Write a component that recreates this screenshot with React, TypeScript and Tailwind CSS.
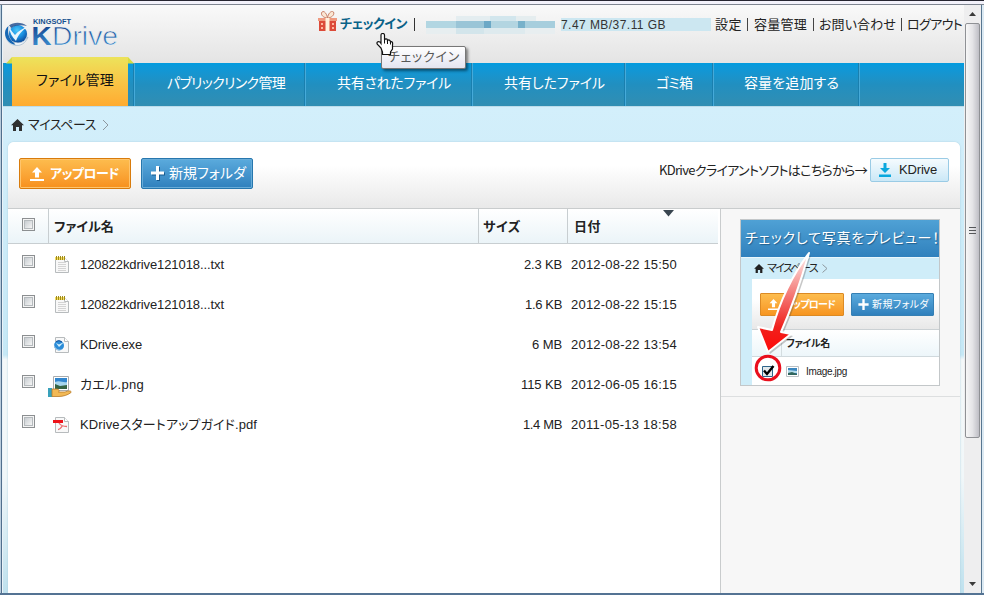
import { useLayoutEffect, useRef, useState } from "react";
import clsx from "clsx";

type LabelProps = { children: string; w: number; className?: string };

/* Single-line label whose tracking is adjusted so that it spans `w` pixels. */
function Label({ children, w, className }: LabelProps) {
  const ref = useRef<HTMLSpanElement>(null);
  const [spacing, setSpacing] = useState(0);
  useLayoutEffect(() => {
    const el = ref.current;
    if (!el) return;
    el.style.letterSpacing = "0px";
    const natural = el.getBoundingClientRect().width;
    const next = (w - natural) / children.length;
    el.style.letterSpacing = `${next}px`;
    setSpacing(next);
  }, [children, w]);
  return (
    <span className={clsx("inline-block shrink-0 whitespace-nowrap", className)} style={{ width: w }}>
      <span ref={ref} className="[font-feature-settings:'palt']" style={{ letterSpacing: spacing }}>
        {children}
      </span>
    </span>
  );
}

function Logo() {
  return (
    <svg width="120" height="40" viewBox="0 0 120 40" className="block">
      <defs>
        <radialGradient id="orb" cx="0.45" cy="0.3" r="0.75">
          <stop offset="0" stopColor="#49c8fa" />
          <stop offset="0.5" stopColor="#1a8fe0" />
          <stop offset="1" stopColor="#0a3c8c" />
        </radialGradient>
        <linearGradient id="word" x1="0" y1="0" x2="0" y2="1">
          <stop offset="0.1" stopColor="#123f8c" />
          <stop offset="0.9" stopColor="#3e93d3" />
        </linearGradient>
      </defs>
      <ellipse cx="11.500" cy="18.500" rx="11" ry="10.500" fill="#c9d8e4" />
      <circle cx="13" cy="17" r="9" fill="url(#orb)" />
      <path d="M3.500 9C1.500 17 5 25 13 28C6 28.500 0 23 0 16C0 13 1.500 10.500 3.500 9Z" fill="#1667b4" />
      <path d="M4 10C4.500 15 7 20 11 24C13 18 17 13 23 10C18 11 13 14 10 18C8 16 6 13 4 10Z" fill="#e9f6fc" />
      <path d="M9 25C14 27 20 25 23 20C21 26 15 29.500 10 28Z" fill="#f3f7fa" stroke="#8aa5bd" strokeWidth=".5" />
      <path d="M4 8.500C9 4.500 17 5 22 9C16 7.500 9 8.500 6.500 11Z" fill="#0e3e85" opacity=".75" />
      <text x="28" y="6.500" fontFamily="Liberation Sans" fontWeight="700" fontSize="6.500" fill="#14508f" textLength="38" lengthAdjust="spacingAndGlyphs">KINGSOFT</text>
      <text x="26.500" y="28" fontFamily="Liberation Sans" fontWeight="700" fontSize="26" fill="url(#word)" textLength="20" lengthAdjust="spacingAndGlyphs">K</text>
      <text x="47" y="28" fontFamily="Liberation Sans" fontSize="26" fill="url(#word)" stroke="#eff0f1" strokeWidth=".7" textLength="66" lengthAdjust="spacingAndGlyphs">Drive</text>
    </svg>
  );
}

function Gift() {
  return (
    <svg width="20" height="22" viewBox="0 0 20 22">
      <path d="M9.500 8C6 8 2 5 4 2C6 0 9 4 9.500 8C10 4 13 0 15.500 2C17 5 13 8 9.500 8Z" fill="#fae7d4" stroke="#c9826a" />
      <path d="M1 8H18V21H1Z" fill="#dc4a39" />
      <path d="M0 8H19V11H0Z" fill="#ef9a80" />
      <path d="M7.500 8H11.500V21H7.500Z" fill="#fff0dd" />
      <path d="M3 13h2v2H3zM14 13h2v2h-2zM3 17h2v2H3zM14 17h2v2h-2z" fill="#ffb59d" />
    </svg>
  );
}

function Home() {
  return (
    <svg width="13" height="12" viewBox="0 0 13 12">
      <path d="M6.500 0L13 6.200H11V12H8V8H5V12H2V6.200H0Z" fill="#303030" />
    </svg>
  );
}

function Chevron() {
  return (
    <svg width="7" height="12" viewBox="0 0 7 12">
      <path d="M1 1L6 6L1 11" fill="none" stroke="#8e989e" />
    </svg>
  );
}

function UploadIcon() {
  return (
    <svg width="14" height="14" viewBox="0 0 14 14" fill="#fff">
      <path d="M7 0L12 5.500H9V10.500H5V5.500H2ZM0 12H14V14H0Z" />
    </svg>
  );
}

function DownloadIcon() {
  return (
    <svg width="12" height="14" viewBox="0 0 12 14" fill="#0ba8de">
      <path d="M4.500 0H7.500V5H11L6 10L1 5H4.500ZM0 11.500H12V14H0Z" />
    </svg>
  );
}

function PlusIcon() {
  return (
    <svg width="14" height="15" viewBox="0 0 14 15">
      <path d="M6 1H9V6.500H14V9.500H9V15H6V9.500H1V6.500H6Z" fill="#175b90" />
      <path d="M5 0H8V5.500H13V8.500H8V14H5V8.500H0V5.500H5Z" fill="#fff" />
    </svg>
  );
}

type Kind = "txt" | "exe" | "png" | "pdf";

function FileIcon({ kind }: { kind: Kind }) {
  if (kind === "png") {
    return (
      <svg width="24" height="22" viewBox="0 0 24 22">
        <path d="M5.500 1.500H20.500V15.500H5.500Z" fill="#fff" stroke="#a9acae" />
        <path d="M7 3H19V14H7Z" fill="#3186ce" />
        <path d="M7 7C12 5 15 8 19 7V11H7Z" fill="#a6d6ee" />
        <path d="M7 9L12 11L19 10V14H7Z" fill="#356444" />
        <path d="M0 13H4V22H0Z" fill="#38a1bb" />
        <path d="M4 14H9C11 14 12 16.500 10.500 17H17C20 15.500 24 15.500 23 17.500C20 20 15 21.500 11 21.500H4Z" fill="#f2b955" stroke="#b87a27" strokeWidth=".8" />
      </svg>
    );
  }
  return (
    <svg width="24" height="22" viewBox="0 0 24 22">
      <path d="M7.500 2.500H16.500L20.500 6.500V17.500H7.500Z" fill="#f8f8f8" stroke="#b7bbbd" />
      <path d="M16.500 2.500V6.500H20.500" fill="#fff" stroke="#b7bbbd" />
      {kind === "txt" && (
        <>
          <path d="M7 2H17V5H7Z" fill="#f5df60" />
          <path d="M8.500 1V5M10.500 1V5M12.500 1V5M14.500 1V5M16.500 1V5" stroke="#a08a1c" />
          <path d="M10 7.500H18M10 9.500H18M10 11.500H18M10 13.500H18M10 15.500H18" stroke="#d4d4d4" />
        </>
      )}
      {kind === "exe" && (
        <>
          <circle cx="11" cy="10.500" r="5" fill="#2b8cd8" />
          <path d="M6 8C6 13 10 16 15 14C11 17 5 15 6 8Z" fill="#b6cfe2" />
          <path d="M8 8L11 12L16 7L11 9.500Z" fill="#d5f0fc" />
          <path d="M8 6.500Q11 4.500 14 7" stroke="#144f98" fill="none" />
        </>
      )}
      {kind === "pdf" && (
        <>
          <path d="M5 5H15V8H5Z" fill="#ed1118" />
          <path d="M11 8C13 11 16 11.500 19 11.500M14.500 10.500C13 13 12 14.500 10 14.500" fill="none" stroke="#ea6b6d" strokeWidth="1.300" />
        </>
      )}
    </svg>
  );
}

function Checkbox() {
  return (
    <span className="block size-[13px] border border-[#8c8f91] bg-[#f4f4f4] p-px">
      <span className="block size-full border border-[#b5babd] bg-linear-to-br from-[#c8cdd1] to-[#f5f5f5]" />
    </span>
  );
}

const tabs = [
  { label: "パブリックリンク管理", w: 118, box: "w-[171px] pl-[32px]" },
  { label: "共有されたファイル", w: 114, box: "w-[167px] pl-[31px]" },
  { label: "共有したファイル", w: 101, box: "w-[153px] pl-[31px]" },
  { label: "ゴミ箱", w: 36, box: "w-[88px] pl-[30px]" },
  { label: "容量を追加する", w: 95, box: "w-[146px] pl-[30px]" },
];

const files: { kind: Kind; name: string; nameW: number; size: string; sizeW: number; date: string }[] = [
  { kind: "txt", name: "120822kdrive121018...txt", nameW: 144, size: "2.3 KB", sizeW: 38, date: "2012-08-22 15:50" },
  { kind: "txt", name: "120822kdrive121018...txt", nameW: 144, size: "1.6 KB", sizeW: 37, date: "2012-08-22 15:15" },
  { kind: "exe", name: "KDrive.exe", nameW: 62, size: "6 MB", sizeW: 30, date: "2012-08-22 13:54" },
  { kind: "png", name: "カエル.png", nameW: 64, size: "115 KB", sizeW: 41, date: "2012-06-05 16:15" },
  { kind: "pdf", name: "KDriveスタートアップガイド.pdf", nameW: 177, size: "1.4 MB", sizeW: 39, date: "2011-05-13 18:58" },
];

function Header() {
  return (
    <header className="flex h-[58px] bg-linear-to-b from-[#f9f9f9] to-[#e4e4e4] text-[13px] leading-[18px] text-[#222]">
      <div className="w-[315px] shrink-0 pt-[12px] pl-[2px]">
        <Logo />
      </div>
      <div className="mt-[5px] flex h-[22px] items-center">
        <Gift />
        <Label w={67} className="mt-[6px] ml-[2px] font-bold text-[#096288]">チェックイン</Label>
        <span className="mt-[7px] ml-[7px] h-[13px] w-px bg-[#333]" />
        <div className="mt-[9px] ml-[11px] flex h-[19px] w-[129px] flex-col">
          <div className="flex h-[5px] pl-[30px]">
            <i className="w-[34px] bg-[#e4edf0]" /><i className="w-[26px] bg-[#d2e6ed]" /><i className="w-[20px] bg-[#e5edef]" />
          </div>
          <div className="flex h-[7px]">
            <i className="w-[30px] bg-[#b2d6e2]" /><i className="w-[28px] bg-[#9ac5d7]" /><i className="w-[7px] bg-[#6ca8c6]" />
            <i className="w-[27px] bg-[#b3d5e1]" /><i className="w-[7px] bg-[#78b1ca]" /><i className="w-[30px] bg-[#a7cedd]" />
          </div>
          <div className="flex h-[6px]">
            <i className="w-[30px] bg-[#e7eef0]" /><i className="w-[28px] bg-[#d3e5eb]" /><i className="w-[41px] bg-[#deeaee]" /><i className="w-[30px] bg-[#e8eef0]" />
          </div>
        </div>
        <div className="mt-[7px] ml-[6px] flex h-[13px] w-[150px] items-center bg-[#cce7f1] text-[12px] text-[#333]">
          <Label w={105}>7.47 MB/37.11 GB</Label>
        </div>
        <Label w={27} className="mt-[7px] ml-[4px]">設定</Label>
        <span className="mt-[7px] ml-[5px] h-[13px] w-px bg-[#444]" />
        <Label w={53} className="mt-[7px] ml-[6px]">容量管理</Label>
        <span className="mt-[7px] ml-[6px] h-[13px] w-px bg-[#444]" />
        <Label w={77} className="mt-[7px] ml-[5px]">お問い合わせ</Label>
        <span className="mt-[7px] ml-[5px] h-[13px] w-px bg-[#444]" />
        <Label w={55} className="mt-[7px] ml-[5px]">ログアウト</Label>
      </div>
    </header>
  );
}

function Nav() {
  return (
    <nav className="relative flex h-[43px] bg-linear-to-b from-[#029bdf] via-[#218fc0] to-[#318eb2] text-[14px] leading-[41px] text-white">
      <div className="w-[131px] shrink-0 border-l border-[#2d8eb5]" />
      <svg className="absolute -top-[6px] left-[3px]" width="128" height="7">
        <path d="M0 6.500L6 0H122L128 6.500Z" fill="#d6dc42" />
      </svg>
      <div className="absolute -top-[6px] left-[9px] h-[49px] w-[116px] bg-linear-to-b from-[#ece35b] via-[#f8c546] to-[#ffab30] pl-[24px] leading-[47px] text-[#111]">
        <Label w={78}>ファイル管理</Label>
      </div>
      {tabs.map((t) => (
        <div key={t.label} className={clsx("shrink-0 border-l border-[#46aad9] shadow-[-1px_0_0_#1a7fae]", t.box)}>
          <Label w={t.w}>{t.label}</Label>
        </div>
      ))}
      <div className="flex-1 border-l border-[#46aad9] shadow-[-1px_0_0_#1a7fae]" />
    </nav>
  );
}

function Toolbar() {
  return (
    <div className="flex h-[67px] items-start rounded-t-[6px] border-b border-[#c9cccd] bg-linear-to-b from-white from-35% to-[#e9e9e9] pt-[16px] pl-[11px] text-[13px]">
      <button className="flex h-[31px] w-[112px] items-center rounded-[2px] border border-[#d87b0c] bg-linear-to-b from-[#fdbd4e] to-[#f7901b] pl-[10px] font-bold text-white shadow-[inset_0_0_0_1px_#ffc56d]">
        <UploadIcon />
        <Label w={69} className="ml-[6px]">アップロード</Label>
      </button>
      <button className="ml-[10px] flex h-[31px] w-[112px] items-center rounded-[2px] border border-[#2777ae] bg-linear-to-b from-[#5babdd] to-[#2f80bd] pl-[9px] text-[14px] text-white shadow-[inset_0_0_0_1px_#68acd8]">
        <PlusIcon />
        <Label w={77} className="ml-[4px]">新規フォルダ</Label>
      </button>
      <Label w={208} className="mt-[2px] ml-[406px] font-['Noto_Sans_CJK_JP',sans-serif] leading-[20px] text-[#222]">KDriveクライアントソフトはこちらから→</Label>
      <button className="ml-[3px] flex h-[24px] w-[79px] items-center rounded-[2px] border border-[#9acbe5] bg-linear-to-b from-[#f5fbfe] to-[#cbe8f7] pl-[8px] text-[#222]">
        <DownloadIcon />
        <Label w={38} className="ml-[8px]">KDrive</Label>
      </button>
    </div>
  );
}

function FileTable() {
  return (
    <div className="w-[713px] shrink-0 border-r border-[#c9cccd] bg-white pr-[2px]">
      <div className="flex h-[35px] border-b border-[#c8ced1] bg-linear-to-b from-white to-[#ebf4f8] text-[13px] leading-[35px] font-bold text-[#222]">
        <div className="w-[40px] pt-[9px] pl-[14px]"><Checkbox /></div>
        <div className="w-[430px] border-l border-[#c8ced1] pl-[5px]"><Label w={60}>ファイル名</Label></div>
        <div className="w-[89px] border-l border-[#c8ced1] pl-[4px]"><Label w={38}>サイズ</Label></div>
        <div className="flex flex-1 border-l border-[#c8ced1] pl-[6px]">
          <Label w={27}>日付</Label>
          <svg className="mt-px ml-[62px]" width="11" height="7"><path d="M0 0H11L5.500 6.500Z" fill="#394650" /></svg>
        </div>
      </div>
      {files.map((f, i) => (
        <div key={i} className="flex h-[40px] text-[13px] leading-[42px] text-[#222]">
          <div className="w-[40px] pt-[11px] pl-[14px]"><Checkbox /></div>
          <div className="w-[32px] pt-[11px]"><FileIcon kind={f.kind} /></div>
          <div className="w-[408px]"><Label w={f.nameW}>{f.name}</Label></div>
          <div className="flex w-[74px] justify-end"><Label w={f.sizeW}>{f.size}</Label></div>
          <Label w={106} className="ml-[9px]">{f.date}</Label>
        </div>
      ))}
    </div>
  );
}

function PreviewCard() {
  return (
    <div className="relative h-[167px] w-[200px] border border-[#c3c7c9] bg-[#cfedf9] text-[#222]">
      <div className="h-[38px] border-b border-[#eaf7fc] bg-linear-to-b from-[#4fa1d5] to-[#3081bd] pl-[4px] text-[14px] leading-[36px] text-white [text-shadow:1px_1px_1px_#235f8b]">
        <Label w={195}>チェックして写真をプレビュー！</Label>
      </div>
      <div className="flex h-[21px] items-center pl-[13px] text-[11px]">
        <svg width="10" height="9" viewBox="0 0 13 12"><path d="M6.500 0L13 6.200H11V12H8V8H5V12H2V6.200H0Z" fill="#222" /></svg>
        <Label w={50} className="ml-[3px]">マイスペース</Label>
        <svg className="ml-[5px]" width="6" height="9" viewBox="0 0 6 9"><path d="M.5 .5L5 4.500L.5 8.500" fill="none" stroke="#8e989e" /></svg>
      </div>
      <div className="ml-[11px] h-[106px] rounded-tl-[3px] bg-white">
        <div className="flex h-[51px] border-b border-[#cbd1d4] bg-linear-to-b from-white from-40% to-[#e8e8e8] pt-[14px] pl-[8px] text-[10px]">
          <div className="flex h-[23px] w-[84px] items-center rounded-[1px] border border-[#dc8a24] bg-linear-to-b from-[#fdbd4e] to-[#f7951f] pl-[7px] font-bold text-white">
            <svg width="11" height="11" viewBox="0 0 14 14" fill="#fff"><path d="M7 0L12 5.500H9V10.500H5V5.500H2ZM0 12H14V14H0Z" /></svg>
            <Label w={51} className="ml-[5px]">アップロード</Label>
          </div>
          <div className="ml-[7px] flex h-[23px] w-[83px] items-center rounded-[1px] border border-[#3680b4] bg-linear-to-b from-[#5babdd] to-[#2f80bd] pl-[6px] text-white">
            <svg width="11" height="11" viewBox="0 0 13 14"><path d="M5 0H8V5.500H13V8.500H8V14H5V8.500H0V5.500H5Z" fill="#fff" /></svg>
            <Label w={57} className="ml-[3px]">新規フォルダ</Label>
          </div>
        </div>
        <div className="flex h-[27px] border-b border-[#d0d9dd] bg-linear-to-b from-white to-[#edf6fa] text-[10px] leading-[27px] font-bold">
          <span className="w-[30px] border-r border-[#d4dde0]" />
          <Label w={44} className="ml-[4px]">ファイル名</Label>
        </div>
        <div className="flex h-[28px] items-center pl-[9px] text-[10px]">
          <svg width="14" height="14" viewBox="0 0 14 14">
            <path d="M1.500 2.500H11.500V12.500H1.500Z" fill="#e3e9ec" stroke="#2e6489" />
            <path d="M3 6.500L6 10L12.500 2" fill="none" stroke="#000" strokeWidth="2.400" />
          </svg>
          <svg className="ml-[11px]" width="13" height="11" viewBox="0 0 13 11">
            <path d="M.5 .5H12.500V10.500H.5Z" fill="#fff" stroke="#bbc1c5" />
            <path d="M2 2H11V9H2Z" fill="#3c87bf" /><path d="M2 4L11 5V7H2Z" fill="#b5dcec" /><path d="M2 7L6 6L11 8V9H2Z" fill="#31665e" />
          </svg>
          <Label w={41} className="ml-[7px]">Image.jpg</Label>
        </div>
      </div>
      <svg className="absolute top-0 left-0" width="198" height="165" viewBox="0 0 198 165">
        <defs>
          <linearGradient id="arrow" x1="0" y1="0" x2="0" y2="1">
            <stop offset="0" stopColor="#fff0ef" /><stop offset=".35" stopColor="#f58c89" /><stop offset=".75" stopColor="#f0211d" /><stop offset="1" stopColor="#ff0909" />
          </linearGradient>
        </defs>
        <path d="M68 33Q43 66 31 110L17 107L27 132L50 114L40 112Q55 78 68 33Z" fill="#444" opacity=".3" transform="translate(2 2)" />
        <path d="M68 33Q43 66 31 110L17 107L27 132L50 114L40 112Q55 78 68 33Z" fill="url(#arrow)" stroke="#fff" strokeWidth="2" strokeLinejoin="round" />
        <circle cx="27" cy="148" r="11.800" fill="none" stroke="#e90f1d" strokeWidth="3" />
      </svg>
    </div>
  );
}

function Scrollbar() {
  return (
    <div className="flex w-[17px] shrink-0 flex-col items-center bg-[#eeeeef]">
      <div className="flex h-[18px] items-center"><svg width="7" height="4"><path d="M0 4L3.500 0L7 4Z" fill="#3a3a3a" /></svg></div>
      <div className="flex h-[415px] w-[15px] items-center justify-center rounded-[2px] border border-[#8f9195] bg-linear-to-r from-[#f7f7f7] via-[#e4e4e7] to-[#bebec5]">
        <svg width="7" height="8"><path d="M0 .5H7M0 3.500H7M0 6.500H7" stroke="#55575a" /></svg>
      </div>
      <div className="flex-1" />
      <div className="flex h-[18px] items-center"><svg width="7" height="4"><path d="M0 0H7L3.500 4Z" fill="#3a3a3a" /></svg></div>
    </div>
  );
}

export default function App() {
  return (
    <div className="relative flex h-[595px] w-[984px] flex-col overflow-hidden bg-[#edf0f5] font-['Liberation_Sans','Noto_Sans_CJK_JP',sans-serif]">
      <div className="h-[5px] shrink-0 border-t border-b border-t-[#252530] border-b-[#7e8590] bg-[#f2f1fa]" />
      <div className="flex h-[588px] border-l border-[#b9ccdc]">
        <div className="w-[2px] shrink-0 border-r border-[#eaf2f8] bg-[#506f8d]" />
        <div className="flex w-[961px] shrink-0 flex-col">
          <Header />
          <Nav />
          <main className="flex flex-1 flex-col border-t border-[#bddce9] bg-[linear-gradient(to_bottom,#d3effb_0%,#c6e8f6_51%,#f4f8f9_52%,#f1f7f9_76%,#bfe1ee_100%)]">
            <div className="flex h-[35px] items-center pl-[8px] text-[13px] leading-[18px] text-[#222]">
              <Home />
              <Label w={68} className="ml-[4px]">マイスペース</Label>
              <span className="ml-[6px]"><Chevron /></span>
            </div>
            <div className="mr-[4px] ml-[5px] flex flex-1 flex-col rounded-t-[6px] bg-white shadow-[0_0_2px_#a5cbdb]">
              <Toolbar />
              <div className="flex flex-1">
                <FileTable />
                <aside className="flex-1 bg-[#f7f7f7]">
                  <div className="h-[188px] border-b border-[#dddfe0] pt-[10px] pl-[19px]"><PreviewCard /></div>
                </aside>
              </div>
            </div>
          </main>
        </div>
        <Scrollbar />
        <div className="flex-1 border-r border-l border-r-[#dce9f2] border-l-[#587690] bg-[#dceaf3]" />
      </div>
      <div className="flex-1 bg-[#547393]" />
      <div className="absolute top-[46px] left-[381px] h-[23px] w-[85px] rounded-[2px] border border-[#777] bg-linear-to-b from-white to-[#e4e5f0] pl-[6px] text-[13px] leading-[20px] text-[#575757] shadow-[2px_2px_3px_#0007]">
        <Label w={72}>チェックイン</Label>
      </div>
      <svg className="absolute top-[33px] left-[376px]" width="19" height="23" viewBox="0 0 19 23">
        <path d="M5 15L1.500 11.500C0 9 2 8 4 9L5 10.500V2C5 0 8.500 0 8.500 2V7C9 5.500 11.500 5.500 11.500 7.500C12.500 6.500 14.500 7 14.500 9C16 8 17 9.500 16.500 12V16L14.500 19V21.500H6.500V19Z" fill="#fff" stroke="#111" strokeWidth="1.200" />
        <path d="M8.500 7V10.500M11.500 8V11M14.500 9V11.500" stroke="#111" />
      </svg>
    </div>
  );
}
